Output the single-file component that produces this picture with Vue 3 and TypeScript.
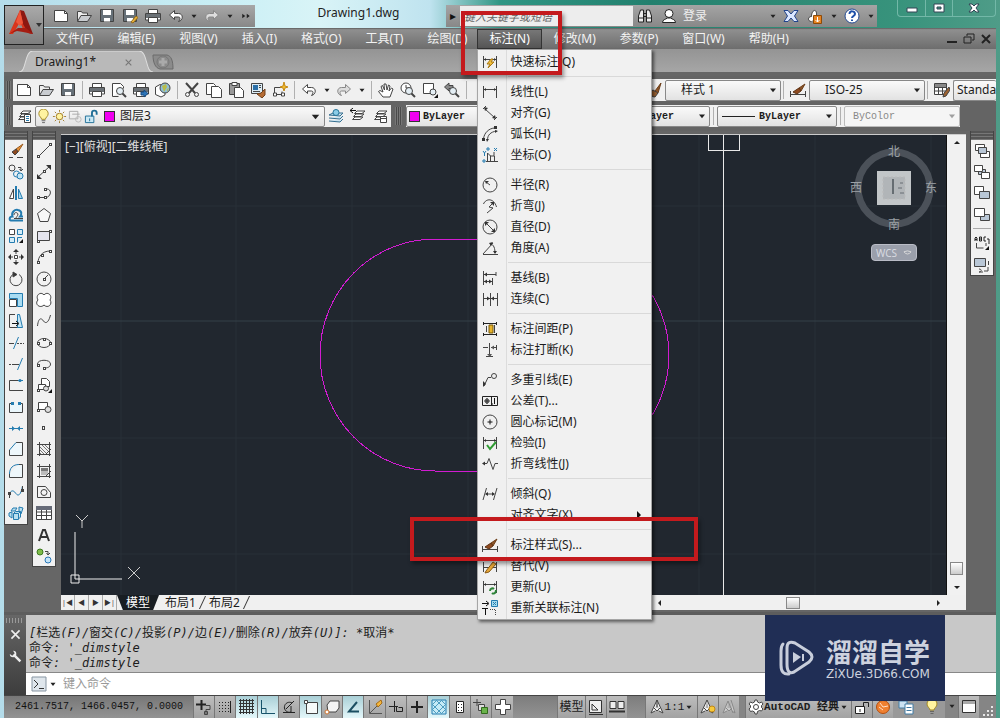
<script setup lang="ts">
import { h } from 'vue'

const arrowEnds = '<path d="M1.500 2v12M14.500 2v12M2 5.500h12"/><path d="M4 4v3L2 5.500zM12 4v3l2-1.500z" fill="#333" stroke="none"/>'
const brush = '<path d="M15 2L9 6l2 3z" fill="#8c5428" stroke="#6b3d18"/><path d="M9 6L3 10l4 2 4-3z" fill="#8f4a20" stroke="#5d3315"/>'
const page = '<path d="M1.500 2.500h10l3 3v8h-13z" fill="#fff"/><path d="M11.500 2.500v3h3"/>'
const disk = '<path d="M1.500 1.500h13v12h-13z" fill="#667078"/><path d="M4 2h8v5H4zM5 10h6v3.500H5z" fill="#fff" stroke="none"/>'
const printer = '<path d="M3.500 6V1.500h9V6M3.500 12h-3V5.500h15V12h-3" fill="#fff"/><path d="M1 6h14v4H1z" fill="#6b7176" stroke="none"/><path d="M3.500 9.500h9v5h-9z" fill="#fff"/>'
const folder = '<path d="M1.500 13V3.500h4l1 1.500h5v2" fill="#eee"/><path d="M1.500 13.500L5 7.500h10.500l-4 6z" fill="#c9ccd0"/>'
const undo = '<path d="M6.500 2.500L1.500 7l5 4.500V9h4c2 0 2 2.500 0 4.500 5-1 5-8 0-8h-4z" fill="#fff"/>'
const redo = '<path d="M9.500 2.500l5 4.500-5 4.500V9h-4c-2 0-2 2.500 0 4.500-5-1-5-8 0-8h4z" fill="#ddd" stroke="#888"/>'
const nod = (x: number, y: number) => `<rect x="${x - 1}.500" y="${y - 1}.500" width="2" height="2" fill="#fff"/>`
const lens = '<circle cx="9" cy="9" r="3.500" fill="#e4eef4"/><path d="M11.500 11.500l3.500 3.500" stroke-width="2"/>'
const stack = '<path d="M4.500 5.500L7 3h8l-3 2.500zM3.500 8.500L6 6h8l-3 2.500zM2.500 11.500L5 9h8l-3 2.500z" fill="#fff"/>'

const icons: Record<string, string> = {
  page, disk, printer, folder, undo, redo,
  diskPen: disk + '<path d="M9 14l5-6 2 1.500-5 5.500z" fill="#e8b23c" stroke="#93691a"/>',
  more: '<path d="M3 5l4 3-4 3zM9 5l4 3-4 3z" fill="#222" stroke="none"/>',
  down: '<path d="M4 6h8l-4 5z" fill="#222" stroke="none"/>',
  preview: '<path d="M1.500 14.500v-13h8l3 3v2M1.500 14.500h6" fill="#fff"/>' + lens,
  plot: printer + '<path d="M8 10h3V8l4 3.500-4 3.500v-2H8z" fill="#2c74b8" stroke="#174a80"/>',
  globe: '<path d="M.500 5L5 2.500 10 4v9l-4 2-5.500-2.500z" fill="#fff"/><circle cx="10" cy="6" r="5" fill="#8fbfd8"/><path d="M7 4l4-2 1 3-3 5zM12 7l2-1-2 4z" fill="#b7bc4a" stroke="none"/>',
  cut: '<path d="M2 1l9 10M14 1L5 11" stroke-width="2"/><circle cx="3.500" cy="12.500" r="2"/><circle cx="12.500" cy="12.500" r="2"/>',
  copy: '<path d="M.500 1.500h7l2 2v9h-9z" fill="#fff"/><path d="M5.500 4.500h7l3 3v8h-10z" fill="#fff"/>',
  paste: '<path d="M1.500 1.500h10v11h-10z" fill="#999"/><path d="M4 .500h5v3H4z" fill="#fff"/><path d="M6.500 5.500h6l3 3v7h-9z" fill="#fff"/>',
  match: '<path d="M1.500 1.500h11v10h-11z" fill="#dcecf5"/><path d="M3 3h5v5H3z" fill="#2a6fa8" stroke="none"/><path d="M3 9.500h7M9 3.500h2M9 5.500h2"/><path d="M15 7l-4 4-4 1 5 4 3-3z" fill="#b46b34" stroke="#70401a"/>',
  block: '<path d="M2.500 11.500v-6h7M4 12.500h6v-3"/><path d="M1.500 11h3v3h-3zM9.500 11h3v3h-3z" fill="#fff"/><path d="M12 0l1 4 3 1-3 1-1 3-1-3-3-1 3-1z" fill="#f0b92c" stroke="#c58a16"/>',
  hand: '<path d="M5 15L.500 9.500 2 8.500 5 10 3 4.500l1.500-1 2 4.500-.500-6h2l1 6 1.500-5L12 4l-1 5 2.500-3L15 7l-3 8z" fill="#fff"/>',
  zoomTime: '<circle cx="6" cy="6" r="5" fill="#fff"/><path d="M6 3v3h3"/>' + lens,
  zoomWin: '<path d="M1.500 1.500h10v10h-10z" fill="#fff"/><circle cx="11" cy="10" r="3" fill="#e4eef4"/><path d="M16 12v4h-4z" fill="#111" stroke="none"/>',
  zoomPrev: '<path d="M5 1L.500 5 5 9V6.500h4v-3H5z" fill="#888"/>' + lens,
  dimBrush: '<path d="M.500 9v6M15.500 9v6M1 12.500h14"/>' + brush,
  textBrush: '<path d="M15 1L9 9l3 2z" fill="#8c5428" stroke="#6b3d18"/><path d="M4 10l3-2 5 3-3 4c-3 0-5-2-5-5z" fill="#9c6130"/>',
  tableBrush: '<path d="M.500 1.500h12v11H.500zM.500 5.500h12M4.500 5.500v7M8.500 5.500v7M.500 9h12" fill="#fff"/><path d="M1 2h11v3H1z" fill="#888" stroke="none"/><path d="M15 5l-5 6-1 4 3-1 4-6z" fill="#9c6130"/>',
  layers: stack + '<path d="M8.500 6.500h6v8h-6z" fill="#fff"/><path d="M10 8.500h3M10 10.500h3M10 12.500h3" stroke="#2878a8"/>',
  layersCur: '<path d="M1 7l4-2h10l-3 3zM1 10l11 1 3-3M1 13l11 1 3-3" fill="#cde5f1" stroke="#356f90"/><circle cx="8" cy="4.500" r="3" fill="#8ccde8" stroke="#257499"/>',
  layersBack: stack + '<path d="M0 2.500h6M3 0L0 2.500 3 5" stroke="#111"/>',
  layersTbl: stack + '<path d="M8.500 8.500h6v6h-6zM8.500 10.500h6" fill="#fff"/>',
  bulb: '<path d="M6 11c0-2-3-3-3-6a5 5 0 0110 0c0 3-3 4-3 6z" fill="#fff3a0" stroke="#a18724"/><path d="M6 12.500h4M6.500 14.500h3" stroke="#666"/>',
  sun: '<circle cx="8" cy="8" r="3.500" fill="#fff3a0" stroke="#a17b24"/><path d="M8 1v2M8 13v2M1 8h2M13 8h2M3 3l1.500 1.500M11.500 11.500L13 13M13 3l-1.500 1.500M4.500 11.500L3 13" stroke="#a17b24"/>',
  vp: '<path d="M1.500 2.500h9v8h-9zM4.500 5.500h8" stroke="#aaa"/><circle cx="11" cy="11" r="3" stroke="#bbb"/>',
  lock: '<path d="M1.500 7.500h9v7h-9z" fill="#cbe9f5" stroke="#1f6e96"/><path d="M8.500 8V4c0-3 5-3 5 0v2" stroke="#1f6e96" stroke-width="2"/><path d="M6 10v3" stroke="#1f6e96"/>',
  // Modify palette
  erase: '<path d="M15 1L8 6l2 3z" fill="#e8923a" stroke="#9b5a1c"/><path d="M8 6l-4 3 3 3 3-3z" fill="#8f4a20"/><path d="M1 14.500h4M9 14.500h6"/>',
  copyObj: '<circle cx="4" cy="4" r="3"/><path d="M10 3.500h3v3M11.500 5l1.500 2 2-2"/><circle cx="8.500" cy="10" r="3" stroke="#247cb0"/><circle cx="12" cy="12" r="3" fill="#c5e6f5" stroke="#247cb0"/>',
  mirror: '<path d="M5.500 4v9.500h-4z" fill="#fff"/><path d="M8 1v14" stroke="#247cb0" stroke-width="2"/><path d="M10.500 4v9.500h4z" fill="#a9d8ee" stroke="#247cb0"/>',
  offset: '<path d="M15 13.500H3c-2 0-2-4 1.500-4C3 5 7 2 10 3c4 1 4 4 2 6.500h3" stroke="#247cb0" stroke-width="2"/><path d="M15 11.500H6M6 8c0-3 3-3 4-1 0 2-2 3-2 4" stroke="#444"/>',
  array: '<path d="M1.500 1.500h5v5h-5z" fill="#fff"/><path d="M9.500 1.500h5v5h-5zM1.500 9.500h5v5h-5zM14 9.500H9.500v5" fill="#d4edf8" stroke="#247cb0"/><path d="M15 11v4h-4z" fill="#111" stroke="none"/>',
  move: '<path d="M8 1v14M1 8h14" stroke-dasharray="4 1"/><path d="M8 0l3 3H5zM8 16l3-3H5zM0 8l3-3v6zM16 8l-3-3v6z" fill="#333" stroke="none"/><path d="M6.500 6.500h3v3h-3z" fill="#fff"/>',
  rotate: '<path d="M5 3.500a6 6 0 106 0"/><path d="M5 1l4 2.500L5 6z" fill="#333"/>',
  scale: '<path d="M1.500 1.500h13v13h-5v-8h-8z" fill="#a9dcf2" stroke="#247cb0"/><path d="M1.500 7.500h7v7h-7z" fill="#fff"/>',
  stretch: '<path d="M7 1.500H1.500v13H14" /><path d="M9.500 1.500h2l3 13h-5z" fill="#c5e6f5" stroke="#247cb0"/><path d="M4 10.500h6M8 8l3 2.500L8 13" stroke="#111"/>',
  trim: '<path d="M10.500 2l-5 12" stroke="#247cb0"/><path d="M1 8.500h5"/><path d="M9 8.500h7" stroke-dasharray="2 1"/>',
  extend: '<path d="M14.500 2l-5 12" stroke="#247cb0"/><path d="M1 8.500h5" stroke-dasharray="2 1"/><path d="M6 8.500h5"/>',
  breakPt: '<path d="M10 3.500H1.500v10H15"/><path d="M10 3.500h5" stroke="#247cb0"/><circle cx="12" cy="3.500" r="1.500" fill="#247cb0" stroke="none"/>',
  breakObj: '<path d="M4 4.500H1.500v9h13v-9H12" fill="#eaf6fb"/><path d="M3 4.500h3M10 4.500h3" stroke="#247cb0" stroke-width="3"/>',
  join: '<path d="M1 8.500h14" stroke="#247cb0"/><path d="M4 6l3 2.500L4 11zM12 6L9 8.500l3 2.500z" fill="#247cb0" stroke="none"/>',
  chamfer: '<path d="M1.500 9v5.500h13v-13H8" fill="#eef7fb"/><path d="M1.500 9L8 1.500" stroke="#247cb0"/>',
  fillet: '<path d="M1.500 11v3.500h13v-13H11" fill="#eef7fb"/><path d="M1.500 11C1.500 5 5 1.500 11 1.500" stroke="#247cb0"/>',
  blend: '<path d="M1.500 14c0-9 4-8 6-5s5 4 7-7" stroke="#247cb0"/><path d="M1.500 9v5M14.500 2v5"/><path d="M0 8h3v3H0zM13 5h3v3h-3z" fill="#444" stroke="none"/>',
  explode: '<path d="M5 3h4L7 6H3zM11 2l4 1-2 6-2-2zM1 8l3-1v6l-3-2zM5.500 8.500h5v6h-5zM5.500 8.500l2-2h5l-2 2M12.500 6.500V12l-2 2" fill="#b9e0f0" stroke="#247cb0"/>',
  // Draw palette
  line: '<path d="M2 14L14 2"/>' + nod(2, 13) + nod(14, 1),
  xline: '<path d="M1 14L14 2"/><path d="M1 10v5h5zM10 1h5v5z" fill="#333" stroke="none"/>' + nod(8, 7),
  pline: '<path d="M2 12.500h7M9 4c8-1 6 8 1 8.500"/>' + nod(2, 12) + nod(9, 12) + nod(9, 4),
  polygon: '<path d="M8 1.500l6.500 5-2.500 8H4L1.500 6.500z" fill="#f7f7f7"/>',
  rect: '<path d="M1.500 3.500h12v9h-12z" fill="#e4e4ee"/>' + nod(2, 13) + nod(14, 3),
  arc: '<path d="M2 14C2 8 6 2 14 2"/>' + nod(2, 13) + nod(6, 6) + nod(14, 2),
  circle: '<circle cx="8" cy="8" r="7"/><path d="M8 8l4-4"/>' + nod(8, 8),
  cloud: '<path d="M8 3c-3-4-9 0-6 5-4 4 2 9 6 5 4 4 9-1 6-5 3-5-3-9-6-5z" fill="#fff"/>',
  spline: '<path d="M1.500 13c1-9 4-8 6-5s5 2 7-6"/>',
  ellipse: '<ellipse cx="8" cy="8" rx="6.500" ry="4.500"/>' + nod(8, 4) + nod(2, 8) + nod(14, 8),
  ellArc: '<path d="M1.500 8c0-5 13-5 13 0 0 3-3 4-6 4"/>' + nod(2, 9) + nod(8, 12),
  insert: '<path d="M5.500 1.500h5l3 3v5h-8z" fill="#fff"/><path d="M2.500 7.500h7v5h-7z" fill="#fff"/><circle cx="10" cy="11.500" r="2.500" fill="#ddd"/><path d="M16 12v4h-4z" fill="#111" stroke="none"/>' + nod(2, 13),
  makeBlk: '<path d="M2.500 3.500h9v7h-9z" fill="#fff"/><circle cx="12" cy="10.500" r="3" fill="#ddd"/>' + nod(2, 11),
  point: '<rect x="6.500" y="6.500" width="2" height="3"/>',
  hatch: '<path d="M3.500 1v14M13.500 1v14M1 3.500h14M1 13.500h14"/><path d="M4 6l7 7M4 9l4 4M6 4l7 7M9 4l4 4M4 12l1 1" stroke="#777"/><path d="M9 14l6-6"/>',
  gradient: '<path d="M5 5h7v3H5z" fill="#777" stroke="none"/><path d="M5 8h7v4H5z" fill="#bbb" stroke="none"/><path d="M3.500 1v14M13.500 1v14M1 3.500h14M1 13.500h14M9 14l6-6"/>',
  region: '<path d="M1.500 2.500h8l5 6v5h-13z" fill="#f4f4f4"/><circle cx="8" cy="8.500" r="3"/>',
  table: '<path d="M.500 1.500h15v13H.500zM.500 7h15M.500 10.500h15M5.500 5v9.500M10.500 5v9.500" fill="#fff"/><path d="M0 1h16v4H0z" fill="#666b78" stroke="none"/>',
  mtext: '<path d="M3 14L7 3h2l4 11M5 10h6" stroke="#333" stroke-width="2"/>',
  addSel: '<circle cx="4" cy="4" r="3" fill="#7ebc4a" stroke="#3d7a20"/><circle cx="12" cy="12" r="3" fill="#c5e3f7" stroke="#2878b8"/><path d="M9 3.500h3v3M10.500 5L12 7l2-2"/>',
  // Draw order palette
  front: '<path d="M1.500 1.500h9v6h-9z" fill="#fff"/><path d="M6.500 8.500h9v6h-9z" fill="#fff"/><path d="M4.500 4.500h8v6h-8z" fill="#b9c7d6"/>',
  back: '<path d="M4.500 5.500h7v5h-7z" fill="#b9c7d6"/><path d="M.500 1.500h8v6h-8zM7.500 8.500h8v6h-8z" fill="#fff"/>',
  above: '<path d="M.500 1.500h9v8h-9z" fill="#fff"/><path d="M5.500 6.500h10v7h-10z" fill="#b9c7d6"/>',
  under: '<path d="M6.500 7.500h9v6h-9z" fill="#b9c7d6"/><path d="M.500 1.500h10v8H.500z" fill="#fff"/>',
  textFront: '<path d="M1 6V3l1-1 1 1v3M1 4.500h2M5.500 2v4h2V2zM5.500 4h2M12 2h-2v4h2M13 4h2v5" stroke="#222"/><path d="M2.500 8v5h7M12 8v3"/><path d="M15 11v4h-4z" fill="#111" stroke="none"/>',
  hatchBack: '<path d="M.500 1.500h11v8h-11z" fill="#b9c7d6"/><path d="M14.500 4v4M14 10v4h-4M5 12c3 0 3 3 0 3h4"/>',
  // Dimension menu
  quick: arrowEnds + '<path d="M9 5l-4 5h3l-2 4 6-6H9l2-3z" fill="#f4c23c" stroke="#a87812"/>',
  linear: arrowEnds,
  aligned: '<path d="M1 4l3-3M12 15l3-3M3 4l10 9" /><path d="M2 2l4 1-3 3zM14 14l-4-1 3-3z" fill="#333" stroke="none"/>',
  arcLen: '<path d="M1.500 13C2 7 7 2 13 2M5.500 14c0-5 3-8 9-9"/><path d="M0 12h3v3H0zM12 0h3v3h-3zM4 13h3l-2 3zM13 4v3l3-2z" fill="#333" stroke="none"/>',
  ordinate: '<path d="M5.500 15V6l3 3v6M4 14.500h12M8 9h4V5M12.500 9v6"/><path d="M5 1h2v2H5zM1 13h2v2H1zM1 4l1.500 2L4 4M2.500 6v3M12 1l3 3M15 1l-3 3" stroke="#247cb0"/>',
  radius: '<circle cx="8" cy="8" r="7"/><path d="M8 8L4 5"/><path d="M3 4h4L4 7z" fill="#333" stroke="none"/>',
  jogged: '<path d="M1.500 6C4 0 12 0 14.500 9M5 15l6-5-4-1 4-4"/><path d="M8 4h4v4z" fill="#333" stroke="none"/>',
  diameter: '<circle cx="8" cy="8" r="7"/><path d="M4 4l8 8"/><path d="M3 3h4L3 7zM13 13H9l4-4z" fill="#333" stroke="none"/>',
  angular: '<path d="M1 14.500h15M1 14L11 3M8 4c4 0 5 5 5 9"/><path d="M11 11h4l-2 3zM7 3l4-1-2 4z" fill="#333" stroke="none"/>',
  baseline: '<path d="M1.500 1v14M14 4.500H2M10.500 8v7M2 11.500h8M14 2v4"/><path d="M2 4.500l3-2v4zM2 11.500l3-2v4zM10 11.500l-3-2v4z" fill="#333" stroke="none"/>',
  continue: '<path d="M1.500 2v13M8.500 2v13M15.500 2v13M2 7.500h13"/><path d="M8 7.500l-3-2v4zM9 7.500l3-2v4z" fill="#333" stroke="none"/>',
  space: '<path d="M1 2.500h14M1 13.500h14M1.500 1v3M14.500 1v3M1.500 12v3M14.500 12v3" stroke="#222"/><path d="M4.500 5v6M12.500 4v8"/><path d="M7 4h4v8H7z" fill="#e8b42b" stroke="#7a5a08"/>',
  dimBreak: '<path d="M7.500 1v13M4 14.500h7M1 5.500h5M9 5.500h5M14.500 3v5"/><path d="M9 5.500l3-2v4zM5 12h5l-2 3z" fill="#555" stroke="none"/>',
  mleader: '<path d="M2 14L6 5.500h3"/><circle cx="12" cy="4" r="2.500"/><path d="M1 15V9l3 3z" fill="#333" stroke="none"/>',
  tol: '<path d="M.500 3.500h15v9H.500zM9.500 3.500v9" stroke="#222"/><path d="M2.500 8h5M5 5v6M12.500 5v6M10 11h1" stroke="#111"/><circle cx="5" cy="8" r="2"/>',
  center: '<circle cx="8" cy="8" r="7"/><path d="M8 5.500v5M5.500 8h5" stroke="#111"/>',
  inspect: arrowEnds + '<path d="M5 10l3 4 6-7" stroke="#2f9b32" stroke-width="2"/>',
  jogLine: '<path d="M1 7.500h4l2-5 4 11 2-6h3"/><path d="M0 7.500l3-2v4z" fill="#333" stroke="none"/>',
  oblique: '<path d="M1 14L4.500 2M11.500 14L15 2M4 8h8"/><path d="M3 8l3-2v4zM13 8l-3-2v4z" fill="#333" stroke="none"/>',
  override: '<path d="M1.500 4v10M14.500 4v10M2 9.500h12"/><path d="M4 13l7-9 3 2-7 8-4 1z" fill="#e8a838" stroke="#8a5a14"/>',
  update: arrowEnds + '<path d="M8 12c0-3 3-3 4-2M14 11c0 4-3 4-4 3" stroke="#2d8438" stroke-width="2"/>',
  reassoc: '<path d="M0 3.500h6M4 1l3 2.500L4 6M0 8.500h6M3.500 9v6" stroke="#111"/><path d="M8 9.500h6M13.500 10v5" stroke-dasharray="1 1"/><path d="M9.500.500h6v6h-6z" fill="#a8dced" stroke="#247cb0"/><path d="M11 2l3 3M14 2l-3 3" stroke="#247cb0"/>',
  // Title bar, status bar
  find: '<path d="M1.500 14V8l2-6h3v12zM9.500 14V2h3l2 6v6z" fill="#eee" stroke="#222"/><path d="M7 5.500h2M7 8.500h2M1.500 10h5M9.500 10h5" stroke="#222"/>',
  user: '<circle cx="8" cy="5.500" r="4" fill="#fff" stroke="#222"/><path d="M1.500 14.500c0-3 3-3 5-4.500h3c2 1.500 5 1.500 5 4.500z" fill="#fff" stroke="#222"/>',
  exchange: '<path d="M1 2.500h4L8 6l3-3.500h4L11.500 8l3.500 5.500h-4L8 10l-3 3.500H1L4.500 8z" fill="#dbe7ff" stroke="#20438c"/>',
  cloudLock: '<path d="M4.500 13.500c-4 0-4-5 0-5 0-7 6-9 5 0" fill="#fff"/><path d="M6.500 7.500h8v8h-8z" fill="#e88320" stroke="#8d4b08"/><path d="M10.500 9v5M8.500 12l2 2 2-2" stroke="#fff"/>',
  help: '<circle cx="8" cy="8" r="7" fill="#fff" stroke="#244b93"/><path d="M5.500 6c0-4 5.500-3 5.500 0 0 2-3 2-3 4M8 11.500v1.500" stroke="#1d4fa8" stroke-width="2"/>',
  infer: '<path d="M5.500 1v10M0 5.500h10" stroke="#222" stroke-width="2"/><path d="M10 6.500h4v4h-4v5M8.500 12.500h3v3h-3z"/>',
  snap: '<path d="M2 3.500h10M2 6.500h10M2 9.500h10M2 12.500h10" stroke-dasharray="1 2" stroke="#222"/><path d="M13.500 2v12" stroke="#222"/>',
  grid: '<path d="M0 1.500h15M0 4.500h15M0 7.500h15M0 10.500h15M0 13.500h15M1.500 0v15M4.500 0v15M7.500 0v15M10.500 0v15M13.500 0v15" stroke="#333"/>',
  ortho: '<path d="M1.500 1v13.500H15M2 9.500h4v5" stroke="#18536a"/>',
  polar: '<path d="M2 13.500h12M5 10l8-8" stroke="#222"/><path d="M11 4a5 5 0 10-1 9V7" stroke="#222"/>',
  osnap: '<path d="M3.500 3.500h11v11h-11z" fill="#f6fafa"/><path d="M1.500 1.500h3v3h-3z" fill="#fff"/>',
  osnap3: '<path d="M3 6l3-4h9v7l-3 4H4z" fill="#f4f4f4"/><circle cx="3" cy="13" r="2" fill="#fff" stroke="#d0742d"/>',
  otrack: '<path d="M12 3L4 12.500h10" stroke="#1c4f62" stroke-width="2"/>',
  ducs: '<path d="M2.500 1v13.500H15M3 14l9-9" stroke="#555"/><path d="M9 5l5-4 1 3-4 4z" fill="#f4b73d" stroke="#a66b14"/>',
  dyn: '<path d="M6.500 2v11M1 7.500h9M8.500 7.500v5h6v-4h-4" stroke="#222"/>',
  lwt: '<path d="M8 2v12M2 8h12" stroke="#222" stroke-width="2"/>',
  tpy: '<path d="M1 1h14v14H1z" fill="#c5eaf6" stroke="#247cb0"/><path d="M1 5l10 10M1 10l5 5M5 1l10 10M10 1l5 5M15 5L5 15M15 10l-5 5M11 1L1 11M6 1L1 6" stroke="#4c9cc0"/>',
  qp: '<path d="M4.500 2.500h7v11h-7z" stroke="#222" fill="#fff"/><path d="M6 5.500h1M9 5.500h1M6 8.500h1M9 8.500h1M6 11.500h1M9 11.500h1" stroke="#222"/>',
  sc: '<path d="M4 0v7M0 3.500h8"/><path d="M5.500 5.500h6v6h-6z" fill="#ddd"/><path d="M8.500 8.500h6v6h-6z" fill="#69b34a" stroke="#326b1d"/>',
  am: '<path d="M5.500.500h5v5h5v5h-5v5h-5v-5h-5v-5h5z" fill="#fff"/>',
  paper: '<path d="M1.500 1.500h12v12h-12z" fill="#eee" stroke="#333"/><path d="M4 5l6 6H4zM1 15.500h14" stroke="#333"/>',
  layoutView: '<path d="M1 2.500h6v7H1zM9 2.500h6v7H9z" fill="#eee" stroke="#333"/><path d="M0 12.500h16" stroke="#333" stroke-width="2"/>',
  scaleA: '<path d="M8 1L2 14l4-2M8 1l6 13-4-2M5 9l3 3 3-3M8 1v7" fill="#f5f5f5"/>',
  scaleSun: '<path d="M7 1L1 14l4-2M7 1l6 13-4-2M4 9l3 3 3-3" fill="#f5f5f5"/><circle cx="12" cy="10" r="3" fill="#f6c93c" stroke="#c18716"/>',
  scaleAuto: '<path d="M7 2L2 14l4-2M7 2l5 12M10 1l4 13-3-2M5 9l3 3 3-3" fill="#ccc" stroke="#888"/>',
  gear: '<path d="M7 1h2l.500 2 2 1 2-1 1.500 2-1.500 1.500v2L15 10l-1.500 2-2-.500-2 1L9 15H7l-.500-2-2-1-2 .500L1 10l1.500-1.500v-2L1 5l1.500-2 2 1 2-1z" fill="#fff"/><circle cx="8" cy="8" r="2.500"/>',
  padlock: '<path d="M1.500 7.500h9v7h-9z" fill="#fff" stroke="#222"/><path d="M9.500 7V3.500h5V8M6 10v3" stroke="#222"/>',
  hardware: '<circle cx="8" cy="8" r="6.500" fill="#f08030" stroke="#b44f10"/><path d="M5 4l3 4 5-1M4 8l4 3" stroke="#ffe0c8" stroke-width="1"/>',
  isolate: '<path d="M1 2h8v7H1z" fill="#cce2f2" stroke="#437ca5"/><path d="M7 5h8v10H7z" fill="#fff" stroke="#437ca5"/><path d="M8.500 8.500h5M8.500 11.500h5" stroke="#437ca5"/>',
  clean: '<path d="M1.500 1.500h13v12h-13z" fill="#fff" stroke="#333"/><path d="M2 2h12v3H2z" fill="#aaa" stroke="none"/>',
  prompt: '<path d="M1 1h14v14H1z" fill="#dfe6ec" stroke="#8795a2"/><path d="M3 4l4 4-4 4M8 12.500h5" stroke="#333"/>',
  wrench: '<path d="M6 6l8 8" stroke="#eee" stroke-width="3"/><path d="M5 1a4 4 0 11-4 4l3 2 3-3z" fill="#eee" stroke="none"/>',
  close: '<path d="M3 3l10 10M13 3L3 13" stroke="currentColor" stroke-width="2"/>'
}

const Icon = (props: { name: string }) =>
  h('svg', { viewBox: '0 0 16 16', class: 'icon', 'aria-hidden': 'true', innerHTML: icons[props.name] })
Icon.props = ['name']

interface MenuEntry { icon?: string; text: string; sub?: boolean }
const menuLeft = ['文件(F)', '编辑(E)', '视图(V)', '插入(I)', '格式(O)', '工具(T)', '绘图(D)']
const menuRight = ['修改(M)', '参数(P)', '窗口(W)', '帮助(H)']
const dimMenu: MenuEntry[][] = [
  [{ icon: 'quick', text: '快速标注(Q)' }],
  [{ icon: 'linear', text: '线性(L)' }, { icon: 'aligned', text: '对齐(G)' }, { icon: 'arcLen', text: '弧长(H)' }, { icon: 'ordinate', text: '坐标(O)' }],
  [{ icon: 'radius', text: '半径(R)' }, { icon: 'jogged', text: '折弯(J)' }, { icon: 'diameter', text: '直径(D)' }, { icon: 'angular', text: '角度(A)' }],
  [{ icon: 'baseline', text: '基线(B)' }, { icon: 'continue', text: '连续(C)' }],
  [{ icon: 'space', text: '标注间距(P)' }, { icon: 'dimBreak', text: '标注打断(K)' }],
  [{ icon: 'mleader', text: '多重引线(E)' }, { icon: 'tol', text: '公差(T)...' }, { icon: 'center', text: '圆心标记(M)' }, { icon: 'inspect', text: '检验(I)' }, { icon: 'jogLine', text: '折弯线性(J)' }],
  [{ icon: 'oblique', text: '倾斜(Q)' }, { text: '对齐文字(X)', sub: true }],
  [{ icon: 'dimBrush', text: '标注样式(S)...' }, { icon: 'override', text: '替代(V)' }, { icon: 'update', text: '更新(U)' }, { icon: 'reassoc', text: '重新关联标注(N)' }]
]
const quickAccess = ['page', 'folder', 'disk', 'diskPen', 'printer']
const standard = [['page', 'folder', 'disk'], ['printer', 'preview', 'plot', 'globe'], ['cut', 'copy', 'paste', 'match', 'block']]
const zooms = ['hand', 'zoomTime', 'zoomWin', 'zoomPrev']
const modify = ['erase', 'copyObj', 'mirror', 'offset', 'array', 'move', 'rotate', 'scale', 'stretch', 'trim', 'extend', 'breakPt', 'breakObj', 'join', 'chamfer', 'fillet', 'blend', 'explode']
const draw = ['line', 'xline', 'pline', 'polygon', 'rect', 'arc', 'circle', 'cloud', 'spline', 'ellipse', 'ellArc', 'insert', 'makeBlk', 'point', 'hatch', 'gradient', 'region', 'table', 'mtext', 'addSel']
const toggles = ['infer', 'snap', 'grid', 'ortho', 'polar', 'osnap', 'osnap3', 'otrack', 'ducs', 'dyn', 'lwt', 'tpy', 'qp', 'sc', 'am']
const active = ['grid', 'ortho', 'osnap', 'otrack', 'tpy']
</script>

<template>
  <div class="app">
    <header class="header">
      <button class="logo" aria-label="应用程序菜单">
        <svg viewBox="0 0 38 38" class="logo-art">
          <path d="M15 4l11 24-8-5-3-7-7 12H4z" fill="#d9351c" />
          <path d="M15 4l4 1 9 23-5-1-5-9z" fill="#8d1710" />
          <path d="M4 28l9-6h8l7 6-10-2-6-1z" fill="#a51d12" />
          <path d="M15 4l-4 12 4 4 3-3z" fill="#f0563a" />
          <path d="M31 17h6l-3 4z" fill="#333" />
        </svg>
      </button>
      <div class="titlebar">
        <div class="quick">
          <button v-for="i in quickAccess" :key="i" class="tool"><Icon :name="i" /></button>
          <button class="tool"><Icon name="undo" /></button>
          <button class="drop"><Icon name="down" /></button>
          <button class="tool"><Icon name="redo" /></button>
          <button class="drop"><Icon name="down" /></button>
          <button class="drop wide"><Icon name="more" /></button>
        </div>
        <h1 class="title">Drawing1.dwg</h1>
        <div class="info">
          <button class="expand" aria-label="展开">▸</button>
          <input class="search" type="text" aria-label="搜索" placeholder="键入关键字或短语" />
          <button class="tool"><Icon name="find" /></button>
          <button class="login"><Icon name="user" /><span>登录</span></button>
          <button class="drop"><Icon name="down" /></button>
          <button class="tool"><Icon name="exchange" /></button>
          <button class="tool"><Icon name="cloudLock" /></button>
          <button class="drop"><Icon name="down" /></button>
          <button class="tool help"><Icon name="help" /></button>
          <button class="drop"><Icon name="down" /></button>
        </div>
        <div class="winctl">
          <button aria-label="最小化"><svg viewBox="0 0 12 12"><path d="M1 6h10v4H1z" fill="#fff" stroke="#345" /></svg></button>
          <button aria-label="最大化"><svg viewBox="0 0 12 12"><path d="M1 2h10v8H1zM4 5h4v2H4z" fill="#fff" stroke="#345" fill-rule="evenodd" /></svg></button>
          <button class="x" aria-label="关闭"><svg viewBox="0 0 12 12"><path d="M1 2h3l2 2 2-2h3L8 6l3 4H8L6 8l-2 2H1l3-4z" fill="#fff" stroke="#345" /></svg></button>
        </div>
      </div>
      <nav class="menubar">
        <button v-for="m in menuLeft" :key="m" class="menu">{{ m }}</button>
        <div class="menu-open">
          <button class="menu current">标注(N)</button>
          <div class="popup" role="menu">
            <div v-for="(group, g) in dimMenu" :key="g" class="group">
              <button v-for="e in group" :key="e.text" class="entry" role="menuitem">
                <span class="entry-icon"><Icon v-if="e.icon" :name="e.icon" /></span>
                <span class="entry-text">{{ e.text }}</span>
                <span v-if="e.sub" class="sub"></span>
              </button>
            </div>
          </div>
        </div>
        <button v-for="m in menuRight" :key="m" class="menu">{{ m }}</button>
        <div class="docctl">
          <button aria-label="最小化文档"><svg viewBox="0 0 12 12"><path d="M1 9h10" stroke="#222" stroke-width="2" /></svg></button>
          <button aria-label="还原文档"><svg viewBox="0 0 12 12"><path d="M4 3V1h7v6H9M1 4h7v6H1z" fill="none" stroke="#222" stroke-width="1" /></svg></button>
          <button aria-label="关闭文档"><svg viewBox="0 0 12 12"><path d="M2 2l8 8M10 2l-8 8" stroke="#222" stroke-width="2" /></svg></button>
        </div>
      </nav>
    </header>

    <div class="filetabs">
      <svg class="tabshape" viewBox="0 0 134 20" preserveAspectRatio="none"><path d="M0 20c8 0 5-20 14-20h106c9 0 6 20 14 20z" fill="#b9b9b9" /><path d="M0 20c8 0 5-20 14-20h106c9 0 6 20 14 20" fill="none" stroke="#dedede" /></svg>
      <div class="filetab"><span>Drawing1*</span><button class="tabclose" aria-label="关闭标签"><Icon name="close" /></button></div>
      <button class="newtab" aria-label="新建标签"><svg viewBox="0 0 22 16"><path d="M1 1h14c4 1 6 5 6 14H8C3 14 1 8 1 1z" fill="#8b8b8b" stroke="#6b6b6b" /><path d="M11 4v8M7 8h8" stroke="#aaa" stroke-width="3" /><circle cx="11" cy="8" r="6" fill="none" stroke="#777" /></svg></button>
    </div>

    <section class="bars">
      <div class="bar">
        <i class="grip"></i>
        <div class="tools">
          <template v-for="(g, n) in standard" :key="n">
            <button v-for="i in g" :key="i" class="tool"><Icon :name="i" /></button><i class="sep"></i>
          </template>
          <button class="tool"><Icon name="undo" /></button>
          <button class="drop"><Icon name="down" /></button>
          <button class="tool"><Icon name="redo" /></button>
          <button class="drop"><Icon name="down" /></button><i class="sep"></i>
          <button v-for="i in zooms" :key="i" class="tool"><Icon :name="i" /></button><i class="sep"></i>
        </div>
        <div class="tools end">
          <button class="tool"><Icon name="textBrush" /></button>
          <label class="combo"><select aria-label="文字样式"><option>样式 1</option></select><Icon name="down" /></label>
          <i class="sep"></i>
          <button class="tool"><Icon name="dimBrush" /></button>
          <label class="combo"><select aria-label="标注样式"><option>ISO-25</option></select><Icon name="down" /></label>
          <i class="sep"></i>
          <button class="tool"><Icon name="tableBrush" /></button>
          <label class="combo cut"><select aria-label="表格样式"><option>Standard</option></select></label>
        </div>
      </div>
      <div class="bar">
        <i class="grip"></i>
        <div class="tools fixed">
          <button class="tool"><Icon name="layers" /></button>
          <label class="combo layer">
            <Icon name="bulb" /><Icon name="sun" /><Icon name="vp" /><Icon name="lock" /><i class="swatch"></i>
            <select aria-label="图层"><option>图层3</option></select><Icon name="down" />
          </label>
          <button class="tool"><Icon name="layersCur" /></button>
          <button class="tool"><Icon name="layersBack" /></button>
          <button class="tool"><Icon name="layersTbl" /></button>
        </div>
        <i class="grip mid"></i>
        <div class="tools">
          <label class="combo mono color"><i class="swatch"></i><select aria-label="颜色"><option>ByLayer</option></select><Icon name="down" /></label>
          <i class="sep"></i>
          <label class="combo mono ltype"><i class="stroke"></i><select aria-label="线型"><option>ByLayer</option></select><Icon name="down" /></label>
          <i class="sep"></i>
          <label class="combo mono ltype"><i class="stroke"></i><select aria-label="线宽"><option>ByLayer</option></select><Icon name="down" /></label>
          <i class="sep"></i>
          <label class="combo mono off"><select aria-label="打印样式" disabled><option>ByColor</option></select><Icon name="down" /></label>
        </div>
        <i class="rest"></i>
      </div>
    </section>

    <main class="work">
      <aside class="palette"><i class="handle"></i><div class="cells"><button v-for="i in modify" :key="i" class="cell"><Icon :name="i" /></button></div></aside>
      <aside class="palette"><i class="handle"></i><div class="cells"><button v-for="i in draw" :key="i" class="cell"><Icon :name="i" /></button></div></aside>
      <div class="viewer">
        <div class="canvas">
          <svg class="drawing">
            <g stroke="#283039"><path d="M60 0v900M175 0v900M291 0v900M407 0v900M523 0v900M638 0v900M754 0v900M870 0v900" /><path d="M0 71h2000M0 303h2000M0 419h2000" /></g>
            <path d="M0 186h2000" stroke="#354049" />
            <path d="M374 104h118a116 116 0 010 232H374a115 116 0 010-232z" fill="none" stroke="#d11bd1" shape-rendering="crispEdges" />
            <path d="M662 15v900M647 0v15h31V0M662 0v15" fill="none" stroke="#e8e8e8" shape-rendering="crispEdges" />
          </svg>
          <div class="vplabel">[−][俯视][二维线框]</div>
          <div class="cube">
            <svg viewBox="0 0 90 120">
              <circle cx="45" cy="53" r="36" fill="none" stroke="#4b5159" stroke-width="7" />
              <path d="M28 36h34v34H28z" fill="#c2c6c8" /><path d="M34 42h22v22H34z" fill="#b1b5b8" stroke="#bbb" stroke-dasharray="2 2" />
              <path d="M44 44v15" stroke="#666d72" stroke-width="2" /><path d="M51 48h3M49 53h4M51 58h4" stroke="#666d72" />
            </svg>
            <span class="n">北</span><span class="w">西</span><span class="e">东</span><span class="s">南</span>
            <button class="wcs">WCS<svg viewBox="0 0 10 6"><path d="M1 2q4-2 8 0-4 5-8 0" fill="none" stroke="#ddd" /></svg></button>
          </div>
          <svg class="ucs" viewBox="0 0 76 72"><path d="M5 18v47h47M1 61h8v8H1z" fill="none" stroke="#eee" stroke-width="1" /><path d="M6 1l6 6 6-6M12 7v7M58 53l12 12M70 53L58 65" fill="none" stroke="#ccc" /></svg>
        </div>
        <div class="vscroll"><i class="up"></i><i class="thumb"></i><i class="dn"></i></div>
        <div class="layouts">
          <button v-for="b in ['|◀', '◀', '▶', '▶|']" :key="b" class="nav">{{ b }}</button>
          <button class="ltab on">模型</button><button class="ltab">布局1</button><button class="ltab">布局2</button>
          <div class="hscroll"><i class="lf"></i><i class="thumb"></i><i class="rt"></i></div>
        </div>
      </div>
      <aside class="palette right"><i class="handle"></i><div class="cells">
        <button v-for="i in ['front', 'back', 'above', 'under']" :key="i" class="cell"><Icon :name="i" /></button>
        <i class="rule"></i>
        <button v-for="i in ['textFront', 'hatchBack']" :key="i" class="cell"><Icon :name="i" /></button>
      </div></aside>
    </main>

    <section class="command">
      <div class="cmdside"><i class="dots"></i><button aria-label="关闭命令行"><Icon name="close" /></button><button aria-label="自定义"><Icon name="wrench" /></button></div>
      <div class="cmdmain">
        <div class="history"><p>[栏选(F)/窗交(C)/投影(P)/边(E)/删除(R)/放弃(U)]: *取消*</p><p>命令: '_dimstyle</p><p>命令: '_dimstyle</p></div>
        <label class="prompt"><Icon name="prompt" /><Icon class="small" name="down" /><input type="text" aria-label="命令" placeholder="键入命令" /></label>
      </div>
    </section>

    <footer class="status">
      <div class="coords">2461.7517, 1466.0457, 0.0000</div>
      <div class="toggles">
        <button v-for="t in toggles" :key="t" class="toggle" :class="{ on: active.includes(t) }"><Icon :name="t" /></button>
      </div>
      <i class="gap"></i>
      <button class="toggle text">模型</button>
      <button class="toggle"><Icon name="paper" /></button>
      <button class="toggle"><Icon name="layoutView" /></button>
      <i class="gap short"></i>
      <button class="toggle scale"><Icon name="scaleA" />1:1<Icon class="small" name="down" /></button>
      <button class="toggle"><Icon name="scaleSun" /></button>
      <button class="toggle"><Icon name="scaleAuto" /></button>
      <button class="toggle space"><Icon name="gear" />AutoCAD 经典<Icon class="small" name="down" /></button>
      <button class="toggle"><Icon name="padlock" /></button>
      <button class="toggle"><Icon name="hardware" /></button>
      <span class="tray"><Icon name="isolate" /><Icon name="bulb" /></span>
      <button class="drop"><Icon name="down" /></button>
      <button class="toggle"><Icon name="clean" /></button>
      <svg class="sizer" viewBox="0 0 12 12"><path d="M9 1h2v2H9zM9 5h2v2H9zM9 9h2v2H9zM5 5h2v2H5zM5 9h2v2H5zM1 9h2v2H1z" fill="#e8e8e8" /></svg>
    </footer>

    <div class="mark mark-menu"></div>
    <div class="mark mark-style"></div>
    <div class="brand">
      <svg viewBox="0 0 36 38"><path d="M4 5Q2 7 2 12v14q0 10 8 9" fill="none" stroke="#c8cedb" stroke-width="3" stroke-linecap="round" /><path d="M8 25V9q0-8 8-5l14 9q6 5 0 10L15 33q-7 3-7-8z" fill="none" stroke="#c8cedb" stroke-width="3" /><path d="M14 13l8 5-8 6z" fill="#c8cedb" /><path d="M24 15v7" stroke="#c8cedb" stroke-width="2" /></svg>
      <div><strong>溜溜自学</strong><span>ZiXUe.3D66.COM</span></div>
    </div>
  </div>
</template>

<style>
body { margin: 0; }
</style>

<style scoped>
.app {
  position: relative; display: flex; flex-direction: column; box-sizing: border-box; min-height: 100vh; padding: 0 4px; overflow: hidden;
  font: 12px/16px "Noto Sans", "Noto Sans CJK SC", sans-serif; color: #1c1c1c;
  background: linear-gradient(90deg, #b4dcea 0, #c9eff5 22%, #d9f4f7 32%, #bfe3ef 43%, #2f9684 50%, #23806e 65%, #38937c 90%, #4f9c88);
}
button, input, select { font: inherit; color: inherit; margin: 0; padding: 0; border: 0; background: none; min-width: 0; }
button { display: flex; align-items: center; justify-content: center; flex: none; }
p, h1 { margin: 0; font-weight: 400; font-size: 12px; }
.icon { width: 16px; height: 16px; flex: none; fill: none; stroke: #444; stroke-width: 1; }
.tool { width: 22px; height: 20px; }
.drop { width: 13px; height: 20px; }
.drop .icon, .icon.small { width: 10px; height: 10px; }

.header { display: grid; grid-template-columns: 40px 1fr; grid-template-rows: 28px 21px; background: linear-gradient(#5b5b5b 0, #8f8f8f 8%, #6d6d6d) 0 28px / 100% 21px no-repeat; }
.logo { grid-row: 1 / 3; box-sizing: border-box; height: 40px; margin-top: 5px; border: 1px solid #222; background: linear-gradient(#aaa, #7e7e7e); }
.logo-art { width: 38px; height: 38px; }
.titlebar { display: flex; align-items: flex-start; }
.quick { display: flex; align-items: center; width: 211px; height: 22px; margin-top: 5px; padding-left: 5px; box-sizing: border-box; background: linear-gradient(#a7a7a7, #888); }
.quick .tool { width: 23px; }
.quick .wide { width: 20px; }
.quick .wide .icon { width: 12px; height: 12px; }
.title { flex: 1; padding-top: 5px; padding-left: 16px; text-align: center; color: #222; }
.info { display: flex; align-items: center; height: 22px; margin-top: 5px; background: linear-gradient(#a4a4a4, #888); width: 431px; }
.expand { width: 14px; height: 22px; color: #111; }
.search { width: 173px; height: 20px; padding-left: 4px; box-sizing: border-box; background: #ededed; }
.search::placeholder { color: #666; font-size: 11px; font-style: italic; opacity: 1; }
.info .tool { width: 24px; }
.login { gap: 6px; width: 96px; justify-content: flex-start; margin-left: 4px; color: #eee; flex: 1; }
.winctl { display: flex; margin-left: 20px; height: 16px; border: 1px solid #73b8a8; border-top: 0; border-radius: 0 0 4px 4px; }
.winctl button { width: 27px; }
.winctl .x { width: 43px; }
.winctl button + button { border-left: 1px solid #73b8a8; }
.winctl svg { width: 12px; height: 12px; }

.menubar { display: flex; color: #f2f2f2; }
.menu { height: 21px; padding: 1px 12px 0; }
.menu-open { position: relative; margin-left: -2px; }
.current { height: 20px; margin-top: 1px; padding: 0 11px; border: 1px solid #333; box-sizing: border-box; background: linear-gradient(#777, #555); color: #fff; }
.docctl { display: flex; margin-left: auto; padding-right: 2px; }
.docctl button { width: 17px; }
.docctl svg { width: 12px; height: 12px; }
.popup { position: absolute; z-index: 5; top: 21px; left: 0; width: 175px; box-sizing: border-box; padding: 1px 0; color: #1b1b1b; border: 1px solid #a6a6a6; background: linear-gradient(90deg, #f0f0f0 28px, #dcdcdc 28px, #dcdcdc 29px, #f1f1f1 29px); box-shadow: 2px 2px 3px #0008; }
.group + .group { border-top: 9px solid transparent; background: linear-gradient(#d9d9d9, #d9d9d9) 30px 4px / 100% 1px no-repeat; background-origin: border-box; }
.entry { position: relative; width: 100%; height: 21px; justify-content: flex-start; }
.entry-icon { display: flex; width: 32px; height: 16px; padding-left: 4px; box-sizing: border-box; }
.sub { position: absolute; right: 10px; border: 4px solid transparent; border-left-color: #111; border-right: 0; }

.filetabs { position: relative; display: flex; align-items: flex-end; height: 27px; padding-bottom: 4px; box-sizing: border-box; background: linear-gradient(#949494, #a6a6a6 85%, #666 86%, #666); }
.tabshape { position: absolute; left: 15px; bottom: 4px; width: 134px; height: 21px; }
.filetab { position: relative; display: flex; align-items: center; justify-content: space-between; width: 98px; height: 20px; margin-left: 31px; }
.tabclose .icon { width: 9px; height: 9px; color: #777; }
.newtab { margin-left: 19px; height: 20px; }
.newtab svg { width: 22px; height: 16px; }

.bars { display: flex; flex-direction: column; gap: 4px; padding: 3px 0 4px; background: #646464; }
.bar { display: flex; height: 22px; overflow: hidden; }
.grip { flex: none; width: 5px; margin: 2px 2px; background: repeating-linear-gradient(90deg, #777 0 1px, #4a4a4a 1px 2px); }
.grip.mid { width: 7px; margin: 2px 4px; }
.tools { display: flex; flex: 1; align-items: center; background: #f0f0f0; min-width: 0; }
.tools.fixed, .tools.end { flex: none; }
.tools .sep { flex: none; width: 1px; height: 18px; margin: 0 3px; background: #b0b0b0; }
.combo { display: flex; align-items: center; box-sizing: border-box; width: 116px; height: 21px; flex: none; border: 1px solid #888; border-radius: 2px; background: linear-gradient(#fafafa, #e2e2e2); }
.combo select { flex: 1; appearance: none; padding-left: 15px; outline: 0; }
.combo > .icon:last-child { width: 12px; height: 12px; margin-right: 1px; }
.combo.cut { width: 43px; border-right: 0; }
.combo.cut select { padding-left: 3px; }
.end .tool { width: 23px; }
.end .sep { margin: 0 2px; }
.combo.layer { width: 290px; }
.combo.layer > .icon { margin-right: 1px; width: 15px; height: 15px; }
.layer select { padding-left: 5px; }
.swatch { flex: none; width: 9px; height: 9px; margin-left: 4px; border: 1px solid #333; background: #f000f0; }
.mono { font: bold 10px/16px "Liberation Mono", "Noto Sans CJK SC", monospace; }
.mono select { padding: 2px 0 0 4px; }
.combo.color { flex: 1; }
.combo.color .swatch { margin-left: 2px; }
.combo.color select { padding-left: 3px; }
.combo.ltype { width: 120px; }
.stroke { width: 33px; height: 1px; margin-left: 4px; background: #222; }
.combo.off { color: #888; background: #f5f5f5; font-weight: 400; border-color: #bbb; }
.off select { padding-left: 8px; opacity: 1; }
.off .icon { opacity: .4; }
.rest { width: 36px; }

.work { flex: 1; display: flex; align-items: flex-start; min-height: 478px; background: #666; }
.palette { flex: none; width: 24px; margin-right: 4px; box-sizing: border-box; border: 1px solid #444; border-top: 0; }
.handle { display: block; height: 9px; background: repeating-linear-gradient(#555 0 2px, #777 2px 3px); }
.cells { display: flex; flex-direction: column; background: #f1f1f1; }
.cell { height: 21px; }
.cell:nth-child(3n) { margin-bottom: 1px; }
.palette.right { margin: 0 2px 0 4px; }
.rule { height: 1px; margin: 3px 2px; background: #aaa; }
.viewer { flex: 1; align-self: stretch; display: grid; grid-template-columns: 1fr 19px; grid-template-rows: 1fr 15px; margin: 3px 0 2px 1px; min-width: 0; border-top: 1px solid #ccc; background: #f0f0f0; }
.canvas { position: relative; overflow: hidden; background: #21272f; border-right: 1px solid #111; }
.drawing { position: absolute; width: 100%; height: 100%; }
.vplabel { position: absolute; top: 4px; left: 4px; color: #e0e0e0; font-size: 12px; }
.cube { position: absolute; top: 0; right: 7px; width: 90px; height: 130px; color: #9ca1a6; }
.cube > svg { width: 90px; height: 120px; }
.cube span { position: absolute; }
.n { top: 9px; left: 39px; } .s { top: 82px; left: 39px; } .w { top: 45px; left: 1px; } .e { top: 45px; left: 76px; }
.wcs { position: absolute; top: 109px; left: 22px; gap: 6px; width: 46px; height: 17px; border-radius: 4px; background: #9a9fab; border: 1px solid #b9bcc6; color: #d8dae0; font-size: 10px; }
.wcs svg { width: 9px; }
.ucs { position: absolute; left: 9px; bottom: 9px; width: 76px; height: 72px; }
.vscroll { display: flex; flex-direction: column; align-items: center; padding: 6px 0; background: #f1f1f1; }
.thumb { box-sizing: border-box; width: 13px; height: 13px; border: 1px solid #888; background: linear-gradient(#fff, #ccc); }
.up, .dn, .lf, .rt { border: 3px solid transparent; }
.up { border-bottom-color: #222; border-top: 0; margin-bottom: auto; }
.dn { border-top-color: #222; border-bottom: 0; margin-top: 11px; }
.lf { border-right-color: #222; border-left: 0; }
.rt { border-left-color: #222; border-right: 0; }
.layouts { grid-column: 1 / 3; display: flex; background: #f0f0f0; }
.nav { width: 14px; font-size: 7px; color: #333; border-right: 1px solid #aaa; box-sizing: border-box; }
.ltab { position: relative; padding: 0 7px 0 6px; }
.ltab:not(.on)::after { content: ""; position: absolute; right: 0; top: 1px; width: 1px; height: 13px; background: #333; transform: skewX(-25deg); }
.ltab.on { background: #181d22; color: #fff; clip-path: polygon(0 0, 100% 0, 86% 100%, 14% 100%); padding: 0 9px; }
.hscroll { display: flex; align-items: center; width: 315px; margin-left: auto; padding: 0 26px 0 7px; box-sizing: border-box; }
.hscroll .thumb { margin: 0 auto 0 125px; width: 14px; height: 12px; }

.command { display: flex; height: 80px; border-top: 3px solid #5d5d5d; box-sizing: content-box; }
.cmdside { display: flex; flex-direction: column; align-items: center; width: 22px; background: linear-gradient(#666, #3d3d3d); color: #eee; }
.dots { width: 18px; height: 5px; margin-top: 3px; background: repeating-linear-gradient(90deg, #999 0 1px, transparent 1px 3px); }
.cmdside button { height: 22px; }
.cmdside .icon { width: 13px; height: 13px; }
.cmdmain { flex: 1; display: flex; flex-direction: column; background: #c8c8c8; }
.history { flex: 1; padding: 11px 3px 0; font: italic 12px/15px "DejaVu Sans Mono", "Noto Sans CJK SC", monospace; font-synthesis: none; }
.history p { line-height: 15px; white-space: nowrap; }
.prompt { display: flex; align-items: center; height: 22px; padding-left: 5px; background: #fff; border-top: 1px solid #888; }
.prompt .small { margin: 0 5px 0 1px; }
.prompt input { flex: 1; outline: 0; }
.prompt input::placeholder { color: #999; opacity: 1; }

.status { display: flex; height: 23px; border-top: 1px solid #444; box-sizing: border-box; background: #858585; }
.coords { width: 189px; padding-left: 11px; box-sizing: border-box; color: #111; font: 10px/22px "Liberation Mono", monospace; background: linear-gradient(#777, #939393); }
.toggles { display: flex; }
.toggle { box-sizing: border-box; width: 21px; border-left: 1px solid #777; background: linear-gradient(#bdbdbd, #a2a2a2); }
.toggles .toggle:nth-child(3n) { width: 22px; }
.toggle.on { background: linear-gradient(#a9cfd6, #e4f7fa); }
.toggle.text { width: 28px; }
.gap { flex: 1; background: linear-gradient(#7d7d7d, #939393); }
.gap.short { flex: none; width: 18px; }
.scale { width: 52px; font: 11px/16px "Liberation Mono", monospace; }
.space { width: 106px; margin-left: 6px; font: bold 11px/16px "Liberation Mono", "Noto Sans CJK SC", monospace; }
.tray { display: flex; align-items: center; justify-content: center; gap: 10px; width: 52px; background: #999; }
.sizer { width: 12px; height: 12px; margin: 9px 2px 0 3px; }

.mark { position: absolute; z-index: 8; box-sizing: border-box; border: 4px solid #c41a1d; box-shadow: 2px 3px 4px #0006; pointer-events: none; }
.mark-menu { left: 461px; top: 11px; width: 101px; height: 64px; }
.mark-style { left: 410px; top: 517px; width: 288px; height: 44px; }
.brand { position: absolute; right: 55px; bottom: 17px; display: flex; align-items: center; gap: 11px; width: 180px; height: 86px; padding-left: 14px; box-sizing: border-box; background: #202e55; color: #cdd2de; }
.brand svg { width: 36px; height: 38px; }
.brand div { display: flex; flex-direction: column; }
.brand strong { font: 700 26px/32px "Noto Sans CJK SC", sans-serif; }
.brand span { font: 12px/14px "DejaVu Sans", sans-serif; }
</style>
